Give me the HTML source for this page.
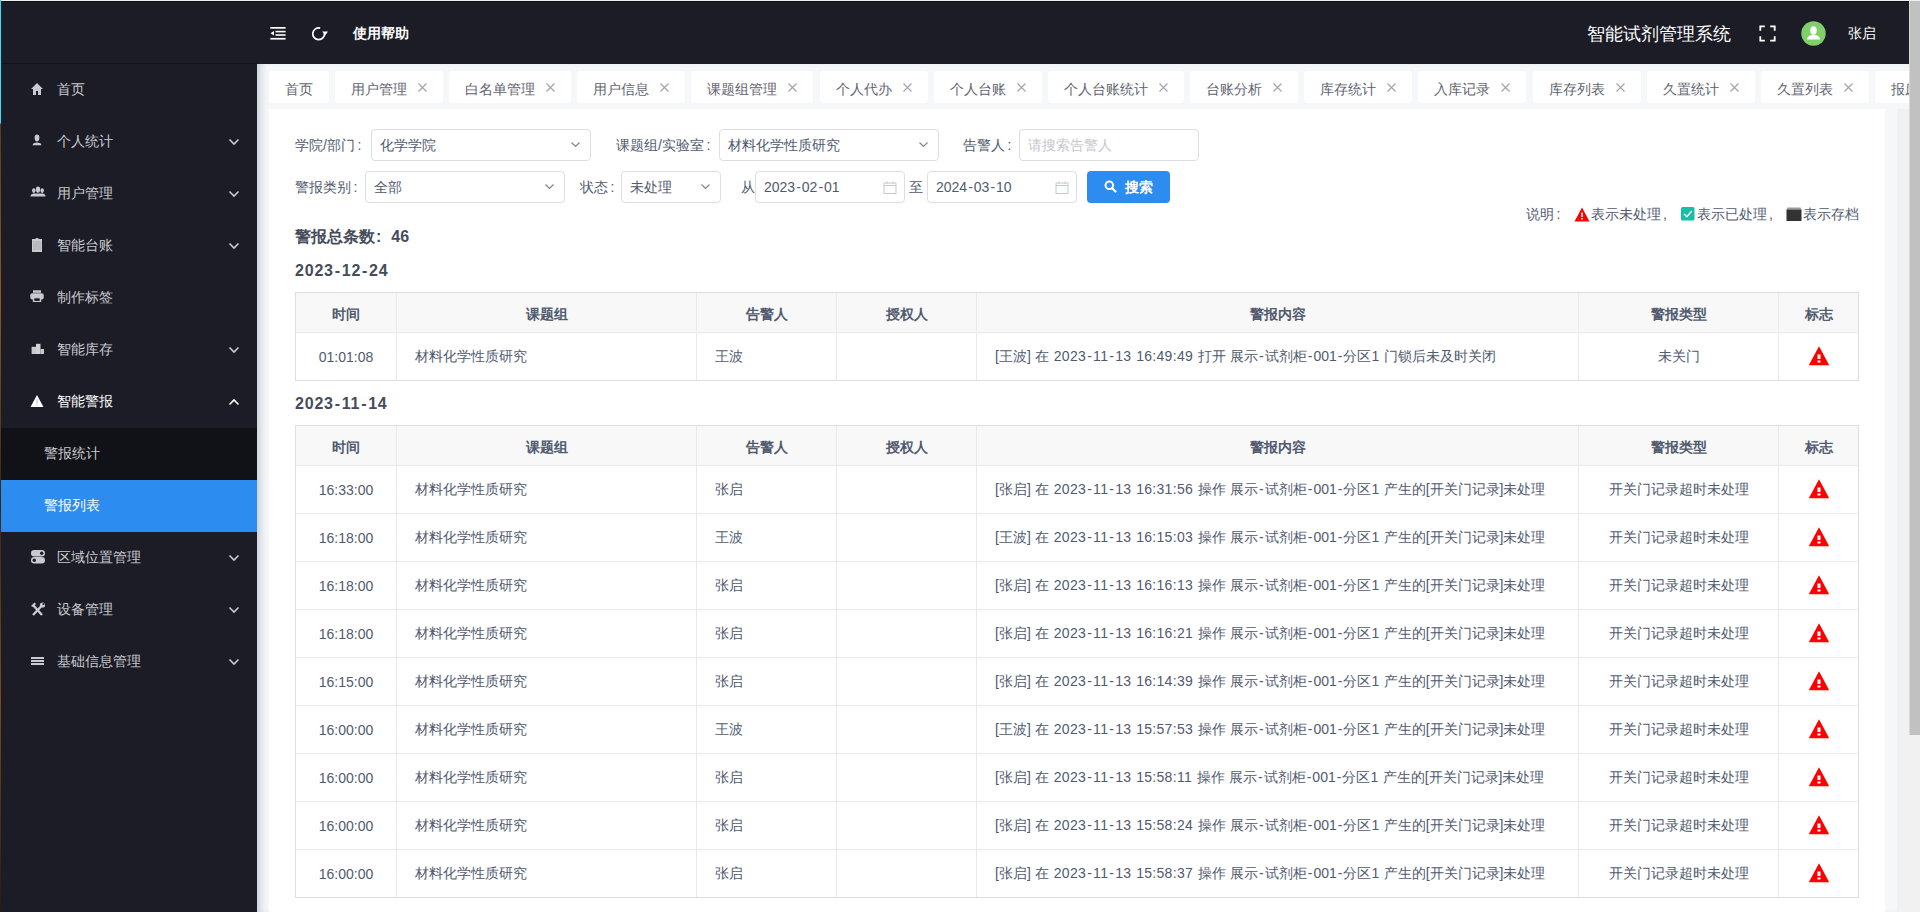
<!DOCTYPE html>
<html><head><meta charset="utf-8">
<style>
*{box-sizing:border-box;margin:0;padding:0}
html,body{width:1920px;height:912px;overflow:hidden}
body{position:relative;background:#f5f7f9;font-family:"Liberation Sans",sans-serif;font-size:14px;color:#515a6e}
.abs{position:absolute}
i.co{font-style:normal;margin-left:2.5px}
i.hy{font-style:normal;margin:0 1px}
span.dt{letter-spacing:0.3px}
td.ct{word-spacing:0.6px}
.h16 i.hy{margin:0 0.9px}
#desk{left:0;top:0;width:1px;height:912px;background:linear-gradient(#3fd9f2 0,#3fd9f2 123px,#5a3a1c 124px,#8a5a24 300px,#3a2614 500px,#7a4a1c 700px,#2a1a10 912px)}
#topline{left:1px;top:0;width:1919px;height:1px;background:#eef0ec}
#side{left:1px;top:1px;width:256px;height:911px;background:#1c1c26}
#logo{left:0;top:0;width:256px;height:63px;border-bottom:1px solid #121219}
.mi{position:absolute;left:0;width:256px;height:52px;line-height:50px;color:#c9cacf;font-size:14px}
.mi .t{position:absolute;left:56px;top:0}
.mi svg.ic{position:absolute;left:29px;top:18px}
.mi svg.ch{position:absolute;left:227px;top:21.5px}
.sub{position:absolute;left:0;width:256px;height:52px;line-height:50px;color:#c9cacf;background:#111118}
.sub .t{position:absolute;left:43px;top:0}
#hdr{left:257px;top:1px;width:1652px;height:63px;background:#1c1c26}
#main{left:257px;top:64px;width:1652px;height:848px;background:#f5f7f9;box-shadow:inset 8px 0 8px -5px rgba(30,45,85,.22)}
.tab{position:absolute;top:7px;height:32px;background:#fff;border-radius:3px;color:#5f6470;line-height:37px;white-space:nowrap;overflow:hidden}
.tab .t{position:absolute;left:16px;top:0}
.tab .x{position:absolute;top:12px;width:9px;height:9px}
#card{left:269px;top:109px;width:1616px;height:803px;background:#fff}
.lbl{position:absolute;height:32px;line-height:32px;color:#515a6e;white-space:nowrap}
.inp{position:absolute;height:32px;border:1px solid #dcdee2;border-radius:4px;background:#fff;line-height:30px;color:#515a6e;white-space:nowrap}
.inp .t{position:absolute;left:8px;top:0}
.inp svg{position:absolute}
.btn{position:absolute;height:32px;background:#2d8cf0;border-radius:4px;color:#fff}
table{position:absolute;left:295px;border-collapse:collapse;table-layout:fixed;width:1563px}
td,th{border:1px solid #e8eaec;height:48px;font-size:14px;color:#515a6e;white-space:nowrap;overflow:hidden}
th{height:40px;background:#f8f8f9;font-weight:bold;text-align:center;padding-top:4px}
td{padding:0 18px}
td.c{text-align:center}
table{outline:1px solid #dcdee2;outline-offset:-1px}
.h16{position:absolute;font-size:16px;font-weight:bold;color:#464c5b;white-space:nowrap;letter-spacing:0.8px}
#sb1{left:1897px;top:109px;width:23px;height:803px;background:#f1f1f1}
#sb2{left:1909px;top:1px;width:11px;height:734px;background:#c1c1c1;border-left:1px solid #d8d8d8}
</style></head><body>
<div id="desk" class="abs"></div>
<div id="topline" class="abs"></div>
<div class="abs" style="left:1px;top:1px;width:1908px;height:1px;background:#0f0f17;z-index:5"></div>

<div id="side" class="abs">
  <div id="logo" class="abs"></div>
  <div class="mi" style="top:63px"><svg class="ic" width="14" height="14" viewBox="0 0 14 14"><path d="M7 1 L1 7 H3 V13 H6 V9 H8 V13 H11 V7 H13 Z" fill="#c9cacf"/></svg><span class="t">首页</span></div>
  <div class="mi" style="top:115px"><svg class="ic" width="14" height="14" viewBox="0 0 14 14"><path d="M4.6 3.5 C4.6 1.5 5.6 0.5 7 0.5 C8.4 0.5 9.4 1.5 9.4 3.5 C9.4 6 8.4 7.6 7 7.6 C5.6 7.6 4.6 6 4.6 3.5 Z" fill="#c9cacf"/><path d="M2.5 11.2 C3 9.2 5 8.6 7 8.6 C9 8.6 11 9.2 11.5 11.2 Z" fill="#c9cacf"/></svg><span class="t">个人统计</span><svg class="ch" width="12" height="8" viewBox="0 0 12 8"><path d="M1.5 1.5 L6 6 L10.5 1.5" stroke="#c9cacf" stroke-width="1.6" fill="none"/></svg></div>
  <div class="mi" style="top:167px"><svg class="ic" width="16" height="14" viewBox="0 0 16 14"><ellipse cx="8" cy="3.6" rx="2.2" ry="3.1" fill="#c9cacf"/><ellipse cx="3.8" cy="4.6" rx="1.7" ry="2.4" fill="#c9cacf"/><ellipse cx="12.2" cy="4.6" rx="1.7" ry="2.4" fill="#c9cacf"/><path d="M0.5 9.8 C1 7.8 2.5 7.4 5 7.4 H11 C13.5 7.4 15 7.8 15.5 9.8 V10.5 H0.5 Z" fill="#c9cacf"/></svg><span class="t">用户管理</span><svg class="ch" width="12" height="8" viewBox="0 0 12 8"><path d="M1.5 1.5 L6 6 L10.5 1.5" stroke="#c9cacf" stroke-width="1.6" fill="none"/></svg></div>
  <div class="mi" style="top:219px"><svg class="ic" width="14" height="14" viewBox="0 0 14 14"><rect x="2" y="1" width="10" height="13" fill="#c9cacf"/><rect x="3" y="3" width="8" height="9" fill="#b9bac0"/><path d="M5 1 L7 -0.5 L9 1 Z" fill="#c9cacf"/></svg><span class="t">智能台账</span><svg class="ch" width="12" height="8" viewBox="0 0 12 8"><path d="M1.5 1.5 L6 6 L10.5 1.5" stroke="#c9cacf" stroke-width="1.6" fill="none"/></svg></div>
  <div class="mi" style="top:271px"><svg class="ic" width="14" height="14" viewBox="0 0 14 14"><rect x="3" y="0.3" width="8" height="2.5" fill="#c9cacf"/><rect x="0.3" y="3.3" width="13.4" height="6.2" rx="2" fill="#c9cacf"/><rect x="2.8" y="7" width="8.4" height="5" fill="#c9cacf"/><rect x="4.3" y="8.3" width="5.4" height="2.6" fill="#1c1c26"/></svg><span class="t">制作标签</span></div>
  <div class="mi" style="top:323px"><svg class="ic" width="14" height="14" viewBox="0 0 14 14"><rect x="1.6" y="4.8" width="4.4" height="7.2" fill="#c9cacf"/><rect x="6" y="1.8" width="4.5" height="10.2" fill="#d2d3d8"/><rect x="10.5" y="7" width="4.2" height="5" fill="#c9cacf"/></svg><span class="t">智能库存</span><svg class="ch" width="12" height="8" viewBox="0 0 12 8"><path d="M1.5 1.5 L6 6 L10.5 1.5" stroke="#c9cacf" stroke-width="1.6" fill="none"/></svg></div>
  <div class="mi" style="top:375px;color:#fff"><svg class="ic" width="14" height="14" viewBox="0 0 14 14"><path d="M7 1 L13.5 13 H0.5 Z" fill="#fff"/><rect x="6.4" y="5" width="1.2" height="4.5" fill="#c8c8c8"/><rect x="6.4" y="10.5" width="1.2" height="1.2" fill="#c8c8c8"/></svg><span class="t">智能警报</span><svg class="ch" width="12" height="8" viewBox="0 0 12 8"><path d="M1.5 6.5 L6 2 L10.5 6.5" stroke="#fff" stroke-width="1.6" fill="none"/></svg></div>
  <div class="sub" style="top:427px"><span class="t">警报统计</span></div>
  <div class="sub" style="top:479px;background:#2d8cf0;color:#fff"><span class="t">警报列表</span></div>
  <div class="mi" style="top:531px"><svg class="ic" width="16" height="15" viewBox="0 0 16 15"><rect x="1" y="0" width="14" height="6.6" rx="3.3" fill="#c9cacf"/><rect x="1" y="7" width="14" height="6.6" rx="3.3" fill="#c9cacf"/><circle cx="11.7" cy="3.3" r="1.7" fill="#1c1c26"/><circle cx="4.3" cy="10.3" r="1.7" fill="#1c1c26"/></svg><span class="t">区域位置管理</span><svg class="ch" width="12" height="8" viewBox="0 0 12 8"><path d="M1.5 1.5 L6 6 L10.5 1.5" stroke="#c9cacf" stroke-width="1.6" fill="none"/></svg></div>
  <div class="mi" style="top:583px"><svg class="ic" width="16" height="14" viewBox="0 0 16 14"><path d="M3 13 L12 3.5" stroke="#c9cacf" stroke-width="2.4"/><path d="M3 3 L12 13" stroke="#c9cacf" stroke-width="2.4"/><path d="M1 4 L4.5 0.5 L6 2 L3 5 Z" fill="#c9cacf"/><circle cx="12.5" cy="3" r="2.6" fill="#c9cacf"/><circle cx="13.5" cy="2" r="1.1" fill="#1c1c26"/></svg><span class="t">设备管理</span><svg class="ch" width="12" height="8" viewBox="0 0 12 8"><path d="M1.5 1.5 L6 6 L10.5 1.5" stroke="#c9cacf" stroke-width="1.6" fill="none"/></svg></div>
  <div class="mi" style="top:635px"><svg class="ic" width="14" height="14" viewBox="0 0 14 14"><rect x="1" y="3" width="13" height="2" fill="#c9cacf"/><rect x="1" y="6" width="13" height="2" fill="#c9cacf"/><rect x="1" y="9" width="13" height="2" fill="#c9cacf"/></svg><span class="t">基础信息管理</span><svg class="ch" width="12" height="8" viewBox="0 0 12 8"><path d="M1.5 1.5 L6 6 L10.5 1.5" stroke="#c9cacf" stroke-width="1.6" fill="none"/></svg></div>
</div>

<div id="hdr" class="abs">
  <svg class="abs" style="left:13px;top:25px" width="16" height="14" viewBox="0 0 16 14"><rect x="0.3" y="1" width="15.3" height="1.7" fill="#fff"/><rect x="5.5" y="4.8" width="10.1" height="1.6" fill="#fff"/><rect x="5.5" y="8.2" width="10.1" height="1.6" fill="#fff"/><rect x="0.3" y="11.9" width="15.3" height="1.7" fill="#fff"/><path d="M0.5 7.3 L4 5 V9.6 Z" fill="#fff"/></svg>
  <svg class="abs" style="left:55px;top:26px" width="17" height="15" viewBox="0 0 17 15"><path d="M8.2 1.1 A5.9 5.9 0 1 0 12.5 6" stroke="#fff" stroke-width="1.7" fill="none"/><path d="M10.2 4.6 L16 4.6 L13.1 8.6 Z" fill="#fff"/></svg>
  <div class="abs" style="left:96px;top:1px;line-height:63px;color:#fff;font-weight:bold">使用帮助</div>
  <div class="abs" style="left:1330px;top:1.5px;line-height:63px;color:#fff;font-size:18px">智能试剂管理系统</div>
  <svg class="abs" style="left:1502px;top:24px" width="17" height="17" viewBox="0 0 17 17"><path d="M1.3 5.8 V1.3 H5.8 M11.2 1.3 H15.7 V5.8 M15.7 11.2 V15.7 H11.2 M5.8 15.7 H1.3 V11.2" stroke="#fff" stroke-width="1.8" fill="none"/></svg>
  <svg class="abs" style="left:1544px;top:20px" width="25" height="25" viewBox="0 0 25 25"><circle cx="12.5" cy="12.5" r="12.2" fill="#81cf6b"/><ellipse cx="12.5" cy="9.5" rx="3.2" ry="4.2" fill="#fff"/><path d="M6 18.5 C6.5 15 9 14 12.5 14 C16 14 18.5 15 19 18.5 Z" fill="#fff"/></svg>
  <div class="abs" style="left:1591px;top:1px;line-height:63px;color:#fff">张启</div>
</div>

<div id="main" class="abs">
<div class="tab" style="left:12px;width:60px"><span class="t">首页</span></div>
<div class="tab" style="left:78px;width:108px"><span class="t">用户管理</span><svg class="x" style="left:83px" width="9" height="9" viewBox="0 0 9 9"><path d="M0.5 0.5 L8.5 8.5 M8.5 0.5 L0.5 8.5" stroke="#9ea2aa" stroke-width="1.1"/></svg></div>
<div class="tab" style="left:192px;width:122px"><span class="t">白名单管理</span><svg class="x" style="left:97px" width="9" height="9" viewBox="0 0 9 9"><path d="M0.5 0.5 L8.5 8.5 M8.5 0.5 L0.5 8.5" stroke="#9ea2aa" stroke-width="1.1"/></svg></div>
<div class="tab" style="left:320px;width:108px"><span class="t">用户信息</span><svg class="x" style="left:83px" width="9" height="9" viewBox="0 0 9 9"><path d="M0.5 0.5 L8.5 8.5 M8.5 0.5 L0.5 8.5" stroke="#9ea2aa" stroke-width="1.1"/></svg></div>
<div class="tab" style="left:434px;width:122px"><span class="t">课题组管理</span><svg class="x" style="left:97px" width="9" height="9" viewBox="0 0 9 9"><path d="M0.5 0.5 L8.5 8.5 M8.5 0.5 L0.5 8.5" stroke="#9ea2aa" stroke-width="1.1"/></svg></div>
<div class="tab" style="left:563px;width:108px"><span class="t">个人代办</span><svg class="x" style="left:83px" width="9" height="9" viewBox="0 0 9 9"><path d="M0.5 0.5 L8.5 8.5 M8.5 0.5 L0.5 8.5" stroke="#9ea2aa" stroke-width="1.1"/></svg></div>
<div class="tab" style="left:677px;width:108px"><span class="t">个人台账</span><svg class="x" style="left:83px" width="9" height="9" viewBox="0 0 9 9"><path d="M0.5 0.5 L8.5 8.5 M8.5 0.5 L0.5 8.5" stroke="#9ea2aa" stroke-width="1.1"/></svg></div>
<div class="tab" style="left:791px;width:136px"><span class="t">个人台账统计</span><svg class="x" style="left:111px" width="9" height="9" viewBox="0 0 9 9"><path d="M0.5 0.5 L8.5 8.5 M8.5 0.5 L0.5 8.5" stroke="#9ea2aa" stroke-width="1.1"/></svg></div>
<div class="tab" style="left:933px;width:108px"><span class="t">台账分析</span><svg class="x" style="left:83px" width="9" height="9" viewBox="0 0 9 9"><path d="M0.5 0.5 L8.5 8.5 M8.5 0.5 L0.5 8.5" stroke="#9ea2aa" stroke-width="1.1"/></svg></div>
<div class="tab" style="left:1047px;width:108px"><span class="t">库存统计</span><svg class="x" style="left:83px" width="9" height="9" viewBox="0 0 9 9"><path d="M0.5 0.5 L8.5 8.5 M8.5 0.5 L0.5 8.5" stroke="#9ea2aa" stroke-width="1.1"/></svg></div>
<div class="tab" style="left:1161px;width:108px"><span class="t">入库记录</span><svg class="x" style="left:83px" width="9" height="9" viewBox="0 0 9 9"><path d="M0.5 0.5 L8.5 8.5 M8.5 0.5 L0.5 8.5" stroke="#9ea2aa" stroke-width="1.1"/></svg></div>
<div class="tab" style="left:1276px;width:108px"><span class="t">库存列表</span><svg class="x" style="left:83px" width="9" height="9" viewBox="0 0 9 9"><path d="M0.5 0.5 L8.5 8.5 M8.5 0.5 L0.5 8.5" stroke="#9ea2aa" stroke-width="1.1"/></svg></div>
<div class="tab" style="left:1390px;width:108px"><span class="t">久置统计</span><svg class="x" style="left:83px" width="9" height="9" viewBox="0 0 9 9"><path d="M0.5 0.5 L8.5 8.5 M8.5 0.5 L0.5 8.5" stroke="#9ea2aa" stroke-width="1.1"/></svg></div>
<div class="tab" style="left:1504px;width:108px"><span class="t">久置列表</span><svg class="x" style="left:83px" width="9" height="9" viewBox="0 0 9 9"><path d="M0.5 0.5 L8.5 8.5 M8.5 0.5 L0.5 8.5" stroke="#9ea2aa" stroke-width="1.1"/></svg></div>
<div class="tab" style="left:1618px;width:108px"><span class="t">报废统计</span><svg class="x" style="left:83px" width="9" height="9" viewBox="0 0 9 9"><path d="M0.5 0.5 L8.5 8.5 M8.5 0.5 L0.5 8.5" stroke="#9ea2aa" stroke-width="1.1"/></svg></div>
</div>

<div id="card" class="abs"></div>
<div class="lbl" style="left:295px;top:129px">学院/部门<i class="co">:</i></div>
<div class="inp" style="left:371px;top:129px;width:220px"><span class="t">化学学院</span><svg class="abs" style="left:198px;top:11px" width="11" height="7" viewBox="0 0 11 7"><path d="M1.5 1.5 L5.5 5.5 L9.5 1.5" stroke="#808695" stroke-width="1.2" fill="none"/></svg></div>
<div class="lbl" style="left:616px;top:129px">课题组/实验室<i class="co">:</i></div>
<div class="inp" style="left:719px;top:129px;width:220px"><span class="t">材料化学性质研究</span><svg class="abs" style="left:198px;top:11px" width="11" height="7" viewBox="0 0 11 7"><path d="M1.5 1.5 L5.5 5.5 L9.5 1.5" stroke="#808695" stroke-width="1.2" fill="none"/></svg></div>
<div class="lbl" style="left:963px;top:129px">告警人<i class="co">:</i></div>
<div class="inp" style="left:1019px;top:129px;width:180px"><span class="t" style="color:#c5c8ce">请搜索告警人</span></div>
<div class="lbl" style="left:295px;top:171px">警报类别<i class="co">:</i></div>
<div class="inp" style="left:365px;top:171px;width:200px"><span class="t">全部</span><svg class="abs" style="left:178px;top:11px" width="11" height="7" viewBox="0 0 11 7"><path d="M1.5 1.5 L5.5 5.5 L9.5 1.5" stroke="#808695" stroke-width="1.2" fill="none"/></svg></div>
<div class="lbl" style="left:580px;top:171px">状态<i class="co">:</i></div>
<div class="inp" style="left:621px;top:171px;width:100px"><span class="t">未处理</span><svg class="abs" style="left:78px;top:11px" width="11" height="7" viewBox="0 0 11 7"><path d="M1.5 1.5 L5.5 5.5 L9.5 1.5" stroke="#808695" stroke-width="1.2" fill="none"/></svg></div>
<div class="lbl" style="left:741px;top:171px">从</div>
<div class="inp" style="left:755px;top:171px;width:150px"><span class="t">2023<i class="hy">-</i>02<i class="hy">-</i>01</span><svg class="abs" style="left:127px;top:9px" width="14" height="13" viewBox="0 0 14 13"><rect x="1" y="2" width="12" height="10.5" stroke="#c5c8ce" stroke-width="1" fill="none"/><path d="M1 4.5 H13 M4 0.5 V3 M10 0.5 V3" stroke="#c5c8ce" stroke-width="1"/></svg></div>
<div class="lbl" style="left:909px;top:171px">至</div>
<div class="inp" style="left:927px;top:171px;width:150px"><span class="t">2024<i class="hy">-</i>03<i class="hy">-</i>10</span><svg class="abs" style="left:127px;top:9px" width="14" height="13" viewBox="0 0 14 13"><rect x="1" y="2" width="12" height="10.5" stroke="#c5c8ce" stroke-width="1" fill="none"/><path d="M1 4.5 H13 M4 0.5 V3 M10 0.5 V3" stroke="#c5c8ce" stroke-width="1"/></svg></div>
<div class="btn" style="left:1087px;top:171px;width:83px"><svg class="abs" style="left:17px;top:9px" width="13" height="13" viewBox="0 0 13 13"><circle cx="5.3" cy="5.3" r="3.8" stroke="#fff" stroke-width="2" fill="none"/><path d="M8 8 L11.5 11.5" stroke="#fff" stroke-width="2.2" stroke-linecap="round"/></svg><span class="abs" style="left:38px;top:0;line-height:32px;font-weight:bold">搜索</span></div>
<div class="lbl" style="left:1526px;top:198px">说明<i class="co">:</i></div>
<svg class="abs" style="left:1574px;top:207px" width="16" height="15" viewBox="0 0 16 15"><path d="M8 0.5 L15.5 14.5 H0.5 Z" fill="#ff0000"/><rect x="7.2" y="5.5" width="1.6" height="4.5" fill="#fff"/><rect x="7.2" y="11" width="1.6" height="1.6" fill="#fff"/></svg>
<div class="lbl" style="left:1591px;top:198px">表示未处理<i class="co" style="margin-left:2px">,</i></div>
<svg class="abs" style="left:1681px;top:207px" width="14" height="14" viewBox="0 0 14 14"><rect x="0" y="0" width="13.5" height="13.5" rx="1.5" fill="#17bfa5"/><path d="M3 7 L5.8 9.8 L10.8 4" stroke="#fff" stroke-width="1.4" fill="none"/></svg>
<div class="lbl" style="left:1697px;top:198px">表示已处理<i class="co" style="margin-left:2px">,</i></div>
<svg class="abs" style="left:1786px;top:207px" width="16" height="14" viewBox="0 0 16 14"><path d="M1.5 0.5 H14.5 L15.5 2.5 H0.5 Z" fill="#9a9a9a"/><rect x="0.5" y="2.5" width="15" height="11.5" fill="#333"/></svg>
<div class="lbl" style="left:1803px;top:198px">表示存档</div>
<div class="h16" style="left:295px;top:227px;letter-spacing:0">警报总条数<i class="co" style="margin:0 10px 0 1px">:</i>46</div>
<div class="h16" style="left:295px;top:262px">2023<i class="hy">-</i>12<i class="hy">-</i>24</div>
<div class="h16" style="left:295px;top:395px">2023<i class="hy">-</i>11<i class="hy">-</i>14</div>
<table style="top:292px"><colgroup><col style="width:101px"><col style="width:300px"><col style="width:140px"><col style="width:140px"><col style="width:602px"><col style="width:200px"><col style="width:80px"></colgroup><tr><th>时间</th><th>课题组</th><th>告警人</th><th>授权人</th><th>警报内容</th><th>警报类型</th><th>标志</th></tr><tr><td class="c">01:01:08</td><td>材料化学性质研究</td><td>王波</td><td></td><td class="ct">[王波] 在 <span class="dt">2023<i class="hy">-</i>11<i class="hy">-</i>13 16:49:49</span> 打开 展示<i class="hy">-</i>试剂柜<i class="hy">-</i>001<i class="hy">-</i>分区1 门锁后未及时关闭</td><td class="c">未关门</td><td class="c"><svg width="22" height="20" viewBox="0 0 22 20" style="display:block;margin:0 auto;position:relative;top:-1px"><path d="M11 0.3 L21.2 19.2 H0.8 Z" fill="#ff0000"/><rect x="9.5" y="8.5" width="3" height="4.5" fill="#fff"/><rect x="9.5" y="14.5" width="3" height="2" fill="#fff"/></svg></td></tr></table>
<table style="top:425px"><colgroup><col style="width:101px"><col style="width:300px"><col style="width:140px"><col style="width:140px"><col style="width:602px"><col style="width:200px"><col style="width:80px"></colgroup><tr><th>时间</th><th>课题组</th><th>告警人</th><th>授权人</th><th>警报内容</th><th>警报类型</th><th>标志</th></tr><tr><td class="c">16:33:00</td><td>材料化学性质研究</td><td>张启</td><td></td><td class="ct">[张启] 在 <span class="dt">2023<i class="hy">-</i>11<i class="hy">-</i>13 16:31:56</span> 操作 展示<i class="hy">-</i>试剂柜<i class="hy">-</i>001<i class="hy">-</i>分区1 产生的[开关门记录]未处理</td><td class="c">开关门记录超时未处理</td><td class="c"><svg width="22" height="20" viewBox="0 0 22 20" style="display:block;margin:0 auto;position:relative;top:-1px"><path d="M11 0.3 L21.2 19.2 H0.8 Z" fill="#ff0000"/><rect x="9.5" y="8.5" width="3" height="4.5" fill="#fff"/><rect x="9.5" y="14.5" width="3" height="2" fill="#fff"/></svg></td></tr><tr><td class="c">16:18:00</td><td>材料化学性质研究</td><td>王波</td><td></td><td class="ct">[王波] 在 <span class="dt">2023<i class="hy">-</i>11<i class="hy">-</i>13 16:15:03</span> 操作 展示<i class="hy">-</i>试剂柜<i class="hy">-</i>001<i class="hy">-</i>分区1 产生的[开关门记录]未处理</td><td class="c">开关门记录超时未处理</td><td class="c"><svg width="22" height="20" viewBox="0 0 22 20" style="display:block;margin:0 auto;position:relative;top:-1px"><path d="M11 0.3 L21.2 19.2 H0.8 Z" fill="#ff0000"/><rect x="9.5" y="8.5" width="3" height="4.5" fill="#fff"/><rect x="9.5" y="14.5" width="3" height="2" fill="#fff"/></svg></td></tr><tr><td class="c">16:18:00</td><td>材料化学性质研究</td><td>张启</td><td></td><td class="ct">[张启] 在 <span class="dt">2023<i class="hy">-</i>11<i class="hy">-</i>13 16:16:13</span> 操作 展示<i class="hy">-</i>试剂柜<i class="hy">-</i>001<i class="hy">-</i>分区1 产生的[开关门记录]未处理</td><td class="c">开关门记录超时未处理</td><td class="c"><svg width="22" height="20" viewBox="0 0 22 20" style="display:block;margin:0 auto;position:relative;top:-1px"><path d="M11 0.3 L21.2 19.2 H0.8 Z" fill="#ff0000"/><rect x="9.5" y="8.5" width="3" height="4.5" fill="#fff"/><rect x="9.5" y="14.5" width="3" height="2" fill="#fff"/></svg></td></tr><tr><td class="c">16:18:00</td><td>材料化学性质研究</td><td>张启</td><td></td><td class="ct">[张启] 在 <span class="dt">2023<i class="hy">-</i>11<i class="hy">-</i>13 16:16:21</span> 操作 展示<i class="hy">-</i>试剂柜<i class="hy">-</i>001<i class="hy">-</i>分区1 产生的[开关门记录]未处理</td><td class="c">开关门记录超时未处理</td><td class="c"><svg width="22" height="20" viewBox="0 0 22 20" style="display:block;margin:0 auto;position:relative;top:-1px"><path d="M11 0.3 L21.2 19.2 H0.8 Z" fill="#ff0000"/><rect x="9.5" y="8.5" width="3" height="4.5" fill="#fff"/><rect x="9.5" y="14.5" width="3" height="2" fill="#fff"/></svg></td></tr><tr><td class="c">16:15:00</td><td>材料化学性质研究</td><td>张启</td><td></td><td class="ct">[张启] 在 <span class="dt">2023<i class="hy">-</i>11<i class="hy">-</i>13 16:14:39</span> 操作 展示<i class="hy">-</i>试剂柜<i class="hy">-</i>001<i class="hy">-</i>分区1 产生的[开关门记录]未处理</td><td class="c">开关门记录超时未处理</td><td class="c"><svg width="22" height="20" viewBox="0 0 22 20" style="display:block;margin:0 auto;position:relative;top:-1px"><path d="M11 0.3 L21.2 19.2 H0.8 Z" fill="#ff0000"/><rect x="9.5" y="8.5" width="3" height="4.5" fill="#fff"/><rect x="9.5" y="14.5" width="3" height="2" fill="#fff"/></svg></td></tr><tr><td class="c">16:00:00</td><td>材料化学性质研究</td><td>王波</td><td></td><td class="ct">[王波] 在 <span class="dt">2023<i class="hy">-</i>11<i class="hy">-</i>13 15:57:53</span> 操作 展示<i class="hy">-</i>试剂柜<i class="hy">-</i>001<i class="hy">-</i>分区1 产生的[开关门记录]未处理</td><td class="c">开关门记录超时未处理</td><td class="c"><svg width="22" height="20" viewBox="0 0 22 20" style="display:block;margin:0 auto;position:relative;top:-1px"><path d="M11 0.3 L21.2 19.2 H0.8 Z" fill="#ff0000"/><rect x="9.5" y="8.5" width="3" height="4.5" fill="#fff"/><rect x="9.5" y="14.5" width="3" height="2" fill="#fff"/></svg></td></tr><tr><td class="c">16:00:00</td><td>材料化学性质研究</td><td>张启</td><td></td><td class="ct">[张启] 在 <span class="dt">2023<i class="hy">-</i>11<i class="hy">-</i>13 15:58:11</span> 操作 展示<i class="hy">-</i>试剂柜<i class="hy">-</i>001<i class="hy">-</i>分区1 产生的[开关门记录]未处理</td><td class="c">开关门记录超时未处理</td><td class="c"><svg width="22" height="20" viewBox="0 0 22 20" style="display:block;margin:0 auto;position:relative;top:-1px"><path d="M11 0.3 L21.2 19.2 H0.8 Z" fill="#ff0000"/><rect x="9.5" y="8.5" width="3" height="4.5" fill="#fff"/><rect x="9.5" y="14.5" width="3" height="2" fill="#fff"/></svg></td></tr><tr><td class="c">16:00:00</td><td>材料化学性质研究</td><td>张启</td><td></td><td class="ct">[张启] 在 <span class="dt">2023<i class="hy">-</i>11<i class="hy">-</i>13 15:58:24</span> 操作 展示<i class="hy">-</i>试剂柜<i class="hy">-</i>001<i class="hy">-</i>分区1 产生的[开关门记录]未处理</td><td class="c">开关门记录超时未处理</td><td class="c"><svg width="22" height="20" viewBox="0 0 22 20" style="display:block;margin:0 auto;position:relative;top:-1px"><path d="M11 0.3 L21.2 19.2 H0.8 Z" fill="#ff0000"/><rect x="9.5" y="8.5" width="3" height="4.5" fill="#fff"/><rect x="9.5" y="14.5" width="3" height="2" fill="#fff"/></svg></td></tr><tr><td class="c">16:00:00</td><td>材料化学性质研究</td><td>张启</td><td></td><td class="ct">[张启] 在 <span class="dt">2023<i class="hy">-</i>11<i class="hy">-</i>13 15:58:37</span> 操作 展示<i class="hy">-</i>试剂柜<i class="hy">-</i>001<i class="hy">-</i>分区1 产生的[开关门记录]未处理</td><td class="c">开关门记录超时未处理</td><td class="c"><svg width="22" height="20" viewBox="0 0 22 20" style="display:block;margin:0 auto;position:relative;top:-1px"><path d="M11 0.3 L21.2 19.2 H0.8 Z" fill="#ff0000"/><rect x="9.5" y="8.5" width="3" height="4.5" fill="#fff"/><rect x="9.5" y="14.5" width="3" height="2" fill="#fff"/></svg></td></tr></table>

<div id="sb1" class="abs"></div>
<div id="sb2" class="abs"></div>
</body></html>
